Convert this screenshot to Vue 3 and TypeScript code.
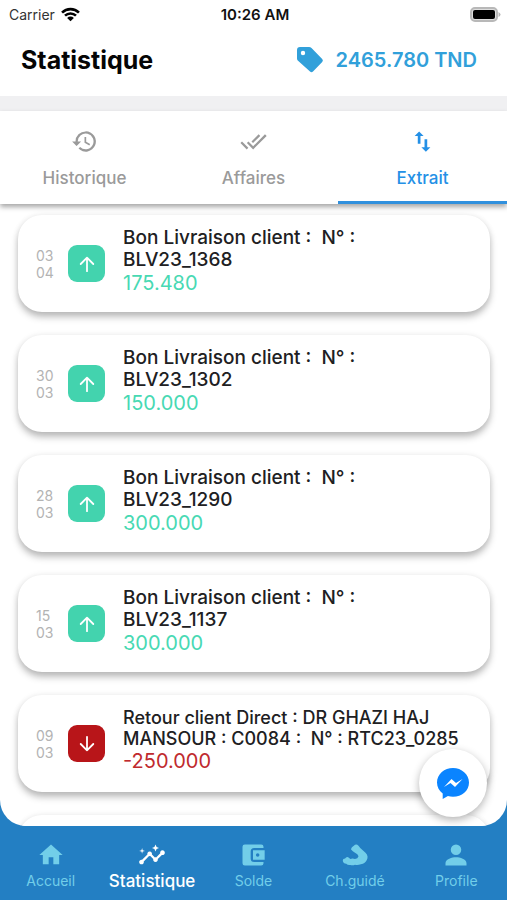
<script setup lang="ts">
import { ref } from 'vue'

interface Entry {
  day: string
  month: string
  title: string
  amount: string
  credit: boolean
}

interface NavItem {
  id: string
  label: string
  path: string
}

const activeTab = ref('extrait')
const activeNav = ref('stats')

const tabs: NavItem[] = [
  {
    id: 'historique',
    label: 'Historique',
    path: 'M13 3a9 9 0 0 0-9 9H1l3.9 3.9.1.1L9 12H6a7 7 0 1 1 2.1 4.9l-1.4 1.4A9 9 0 1 0 13 3zm-1 5v5l4.3 2.5.7-1.2-3.5-2.1V8z',
  },
  {
    id: 'affaires',
    label: 'Affaires',
    path: 'M18 7l-1.4-1.4-6.4 6.3 1.4 1.4zm4.2-1.4L11.7 16.2 7.5 12l-1.4 1.4 5.6 5.6 12-12zM.4 13.4L6 19l1.4-1.4L1.8 12z',
  },
  {
    id: 'extrait',
    label: 'Extrait',
    path: 'M16.2 17V10h-2.400v7h-2.800l4 4 4-4zM9 3L5 7h2.800v7h2.400V7H13z',
  },
]

const navItems: NavItem[] = [
  { id: 'home', label: 'Accueil', path: 'M10 20v-6h4v6h5v-8h3L12 3 2 12h3v8z' },
  {
    id: 'stats',
    label: 'Statistique',
    path: 'M21 8c-1.45 0-2.26 1.44-1.93 2.51l-3.55 3.56c-.3-.09-.74-.09-1.04 0l-2.55-2.55C12.27 10.45 11.46 9 10 9c-1.45 0-2.27 1.44-1.93 2.52l-4.56 4.55C2.44 15.74 1 16.55 1 18c0 1.1.9 2 2 2 1.45 0 2.26-1.44 1.93-2.51l4.55-4.56c.3.09.74.09 1.04 0l2.55 2.55C12.73 16.55 13.54 18 15 18c1.45 0 2.27-1.44 1.93-2.52l3.56-3.55C21.56 12.26 23 11.45 23 10c0-1.1-.9-2-2-2zM15 9l.94-2.07L18 6l-2.06-.93L15 3l-.92 2.07L12 6l2.08.93zM3.5 11L4 9l2-.5L4 8l-.5-2L3 8l-2 .5L3 9z',
  },
  {
    id: 'solde',
    label: 'Solde',
    path: 'M5 3h14a2 2 0 0 1 2 2v1h-8a3 3 0 0 0-3 3v6a3 3 0 0 0 3 3h8v1a2 2 0 0 1-2 2H5a2 2 0 0 1-2-2V5a2 2 0 0 1 2-2zM12 8h10v8H12zm4 2.5a1.5 1.5 0 1 0 0 3 1.5 1.5 0 0 0 0-3z',
  },
  {
    id: 'guide',
    label: 'Ch.guidé',
    path: 'M11 4q2-2 4 0l1.500 2 4.500 4q3 3 1 6.500-1 2.500-5 3.500-3 1-5 .3-2 1-4 .2-2 .5-3.500-1-2.500 0-3-2.500 0-2 2-2 1.500-2.500 3.500-.5l1 1q2-.8 4 0 2.500-.5 3-2.500-.5-2-3-3-2.500-1.500-3.500-3 .5-2 2.500-3z',
  },
  {
    id: 'profile',
    label: 'Profile',
    path: 'M12 12a4.5 4.5 0 1 0 0-9 4.5 4.5 0 0 0 0 9zm0 2c-3.4 0-9 1.5-9 5v2h18v-2c0-3.5-5.6-5-9-5z',
  },
]

const entries: Entry[] = [
  { day: '03', month: '04', title: 'Bon Livraison client :\u00a0 N° : BLV23_1368', amount: '175.480', credit: true },
  { day: '30', month: '03', title: 'Bon Livraison client :\u00a0 N° : BLV23_1302', amount: '150.000', credit: true },
  { day: '28', month: '03', title: 'Bon Livraison client :\u00a0 N° : BLV23_1290', amount: '300.000', credit: true },
  { day: '15', month: '03', title: 'Bon Livraison client :\u00a0 N° : BLV23_1137', amount: '300.000', credit: true },
  {
    day: '09',
    month: '03',
    title: 'Retour client Direct : DR GHAZI HAJ MANSOUR : C0084 :\u00a0 N° : RTC23_0285',
    amount: '-250.000',
    credit: false,
  },
]
</script>

<template>
  <div class="app">
    <div class="screen">
      <div class="status">
        <div class="carrier">
          <span>Carrier</span>
          <svg class="wifi" viewBox="0 0 18 14" aria-hidden="true">
            <path d="M1 5.2a11.5 11.5 0 0 1 16 0M3.8 8.1a7.5 7.5 0 0 1 10.4 0" />
            <path class="dot" d="M9 13.5L5.8 10.3a4.6 4.6 0 0 1 6.4 0z" />
          </svg>
        </div>
        <span class="time">10:26 AM</span>
        <svg class="battery" viewBox="0 0 31 15" aria-hidden="true">
          <rect x="1" y="1" width="26" height="13" rx="4" fill="#ddd" stroke="#b8b8b8" stroke-width="2" />
          <rect x="3" y="3" width="22" height="9" rx="2" fill="#000" />
          <path d="M28.5 5v5q2-1 2-2.500t-2-2.500z" fill="#b5b5b5" />
        </svg>
      </div>

      <header class="header">
        <h1>Statistique</h1>
        <div class="balance">
          <svg viewBox="0 0 28 28" aria-hidden="true">
            <path d="M4 1h9q1.500 0 2.500 1l10.700 11q1.400 1.500 0 3L17 25.500q-1.500 1.400-3 0L2.300 15Q1 14 1 12.500V4q0-3 3-3zM7 4.800a2.200 2.200 0 1 0 0 4.400 2.200 2.200 0 0 0 0-4.400z" fill-rule="evenodd" />
          </svg>
          <span>2465.780 TND</span>
        </div>
      </header>

      <nav class="tabs">
        <button
          v-for="tab in tabs"
          :key="tab.id"
          type="button"
          class="tab"
          :class="{ active: activeTab === tab.id }"
          @click="activeTab = tab.id"
        >
          <svg viewBox="0 0 24 24" aria-hidden="true"><path :d="tab.path" /></svg>
          <span>{{ tab.label }}</span>
        </button>
      </nav>

      <main class="list">
        <article
          v-for="entry in entries"
          :key="entry.title"
          class="card"
          :class="{ debit: !entry.credit }"
        >
          <div class="date">
            <span>{{ entry.day }}</span>
            <span>{{ entry.month }}</span>
          </div>
          <div class="badge">
            <svg viewBox="0 0 20 20" aria-hidden="true">
              <path :d="entry.credit ? 'M10 18V3M3 10l7-7 7 7' : 'M10 2v15M3 10l7 7 7-7'" />
            </svg>
          </div>
          <div class="details">
            <h2>{{ entry.title }}</h2>
            <p>{{ entry.amount }}</p>
          </div>
        </article>
        <div class="card"></div>
      </main>

      <button type="button" class="chat" aria-label="Messenger">
        <svg viewBox="0 0 32 32" aria-hidden="true">
          <path fill="#0a84ff" d="M16 1C7.500 1 0 7 0 15.500c0 4.500 2.200 8.300 5.700 11V32l5.200-2.900c1.600.5 3.300.7 5.100.7 8.800 0 16-6 16-14.300S24.500 1 16 1z" />
          <path fill="#fff" d="M7 20l7.500-8 4.500 4 6.500-4-7.500 8-4.500-4z" />
        </svg>
      </button>
    </div>

    <nav class="bottom">
      <button
        v-for="item in navItems"
        :key="item.id"
        type="button"
        class="nav-item"
        :class="{ active: activeNav === item.id }"
        @click="activeNav = item.id"
      >
        <svg viewBox="0 0 24 24" aria-hidden="true"><path fill-rule="evenodd" :d="item.path" /></svg>
        <span>{{ item.label }}</span>
      </button>
    </nav>
  </div>
</template>

<style>
body {
  margin: 0;
}
</style>

<style scoped>
.app {
  display: flex;
  flex-direction: column;
  height: 100vh;
  background: #237fc3;
  font-family: Inter, 'Liberation Sans', sans-serif;
  color: #202022;
}

button {
  border: 0;
  padding: 0;
  background: none;
  font: inherit;
  cursor: pointer;
}

h1,
h2,
p {
  margin: 0;
}

.screen {
  position: relative;
  display: flex;
  flex: 1;
  flex-direction: column;
  min-height: 0;
  overflow: hidden;
  border-radius: 0 0 26px 26px;
  background: #fff;
}

.status {
  display: grid;
  grid-template-columns: 1fr auto 1fr;
  align-items: center;
  height: 28px;
  padding: 0 6px 0 9px;
  color: #111;
  font-size: 14px;
}

.carrier {
  display: flex;
  align-items: center;
  gap: 6px;
  color: #333;
}

.wifi {
  width: 19px;
  height: 15px;
  fill: none;
  stroke: #000;
  stroke-width: 2.5;
}

.wifi .dot {
  fill: #000;
  stroke: none;
}

.time {
  font-size: 15px;
  font-weight: 600;
}

.battery {
  justify-self: end;
  width: 31px;
  height: 15px;
}

.header {
  display: flex;
  align-items: center;
  justify-content: space-between;
  padding: 12px 30px 16px 21px;
  border-bottom: 15px solid #f0f0f2;
}

h1 {
  color: #050505;
  font-size: 25px;
  font-weight: 700;
  line-height: 40px;
}

.balance {
  display: flex;
  align-items: center;
  gap: 12px;
  color: #31a0da;
  font-size: 20px;
  font-weight: 600;
}

.balance svg {
  width: 28px;
  height: 28px;
  fill: currentColor;
}

.tabs {
  position: relative;
  z-index: 1;
  display: grid;
  grid-template-columns: repeat(3, 1fr);
  background: #fff;
  box-shadow: 0 3px 5px rgba(0, 0, 0, 0.35);
}

.tab {
  display: flex;
  flex-direction: column;
  align-items: center;
  gap: 11px;
  padding: 17px 0 11px;
  border-bottom: 3px solid transparent;
  color: #9a9a9a;
  font-size: 17px;
  font-weight: 500;
  line-height: 24px;
}

.tab.active {
  border-bottom-color: #3090dd;
  color: #2490e6;
}

.tab svg {
  width: 27px;
  height: 27px;
  fill: currentColor;
}

.list {
  display: flex;
  flex: 1;
  flex-direction: column;
  gap: 23px;
  min-height: 0;
  padding: 11px 17px 0 18px;
  overflow: hidden;
}

.card {
  display: flex;
  flex: none;
  align-items: center;
  box-sizing: border-box;
  min-height: 97px;
  padding: 0 18px;
  border-radius: 24px;
  background: #fff;
  box-shadow: 0 5px 7px rgba(0, 0, 0, 0.26), 0 0 6px rgba(0, 0, 0, 0.07);
}

.date {
  display: flex;
  flex-direction: column;
  flex: none;
  width: 32px;
  color: #b3b3b3;
  font-size: 14px;
  line-height: 17px;
}

.badge {
  display: grid;
  flex: none;
  place-items: center;
  width: 37px;
  height: 37px;
  margin-right: 18px;
  border-radius: 9px;
  background: #43d3ae;
}

.badge svg {
  width: 18px;
  height: 18px;
  fill: none;
  stroke: #fff;
  stroke-width: 2;
  stroke-linecap: round;
  stroke-linejoin: round;
}

.details {
  flex: 1;
  align-self: flex-start;
  padding: 12px 0;
}

h2 {
  max-width: 270px;
  font-size: 19px;
  font-weight: 500;
  line-height: 22px;
}

.details p {
  color: #48d9b3;
  font-size: 20px;
  line-height: 24px;
}

.debit .badge {
  background: #b81519;
}

.debit h2 {
  max-width: none;
  font-size: 18px;
  line-height: 21px;
}

.debit p {
  color: #c02a2e;
}

.chat {
  position: absolute;
  right: 20px;
  bottom: 9px;
  z-index: 2;
  display: grid;
  place-items: center;
  width: 68px;
  height: 68px;
  border-radius: 50%;
  background: #fff;
  box-shadow: 0 3px 8px rgba(0, 0, 0, 0.3);
}

.chat svg {
  width: 32px;
  height: 32px;
}

.bottom {
  display: grid;
  grid-template-columns: repeat(5, 1fr);
  height: 74px;
}

.nav-item {
  display: flex;
  flex-direction: column;
  align-items: center;
  gap: 1px;
  padding-top: 15px;
  color: #72cee9;
  font-size: 14px;
  line-height: 22px;
}

.nav-item svg {
  width: 28px;
  height: 28px;
  fill: currentColor;
}

.nav-item.active {
  color: #fff;
  font-size: 17px;
  font-weight: 500;
}
</style>
